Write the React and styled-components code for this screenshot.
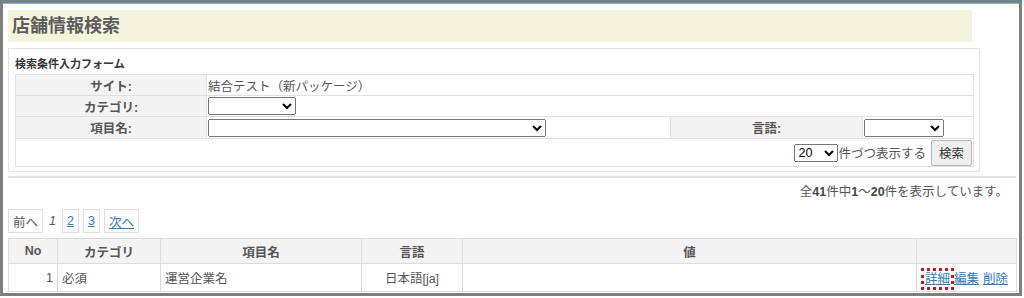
import styled, { createGlobalStyle } from "styled-components";

const GlobalStyle = createGlobalStyle`
  html, body {
    margin: 0;
    padding: 0;
    background: #fff;
  }
  body {
    font-family: "Liberation Sans", "Noto Sans CJK JP", sans-serif;
    font-size: 12.5px;
    color: #555;
  }
`;

const Frame = styled.div`
  box-sizing: border-box;
  width: 1022px;
  height: 296px;
  border: 3px solid #7f7f7f;
  box-shadow: inset 0 1px 0 #62c3e6;
  padding: 7px 3px 0 5px;
  overflow: hidden;
  background: #fff;
`;

const Title = styled.h1`
  box-sizing: border-box;
  width: 964px;
  height: 32px;
  margin: 0;
  padding: 0 4px;
  background: #f4f3dc;
  font-size: 18px;
  line-height: 32px;
  font-weight: bold;
  color: #5c5c5c;
`;

const FormBox = styled.div`
  box-sizing: border-box;
  width: 972px;
  margin-top: 6px;
  padding: 7px 6px 4px 6px;
  border: 1px solid #e2e2e2;
`;

const FormHeading = styled.div`
  font-size: 11px;
  font-weight: bold;
  color: #333;
  line-height: 16px;
  margin-bottom: 2px;
`;

const FormTable = styled.table`
  width: 958px;
  border-collapse: collapse;
  table-layout: fixed;
  td, th {
    border: 1px solid #e0e0e0;
    padding: 0 1px;
  }
`;

const LabelCell = styled.th`
  background: #f3f3f3;
  font-weight: bold;
  color: #555;
  text-align: center;
  font-size: 12.5px;
`;

const Row = styled.tr`
  height: ${(p) => p.$h}px;
`;

const ValueCell = styled.td`
  text-align: ${(p) => p.$align || "left"};
  font-size: 12.5px;
  color: #555;
`;

const Select = styled.select`
  box-sizing: border-box;
  width: ${(p) => p.$w}px;
  height: 18px;
  font-size: 12.5px;
  padding: 0;
  vertical-align: middle;
`;

const PerPage = styled.span`
  vertical-align: middle;
  margin: 0 5px 0 1px;
  font-size: 12.5px;
`;

const SearchButton = styled.button`
  box-sizing: border-box;
  width: 41px;
  height: 26px;
  font-family: inherit;
  font-size: 12.5px;
  color: #333;
  background: #efefef;
  border: 1px solid #b5b5b5;
  border-radius: 2px;
  padding: 0;
  vertical-align: middle;
`;

const Divider = styled.hr`
  width: 1008px;
  margin: 4px 0 0 0;
  border: 0;
  border-top: 2px solid #e3e3e3;
`;

const Total = styled.div`
  width: 1008px;
  text-align: right;
  padding-right: 8px;
  box-sizing: border-box;
  margin-top: 6px;
  line-height: 16px;
  color: #555;
  b {
    color: #444;
  }
`;

const Pager = styled.div`
  display: flex;
  align-items: center;
  gap: 4px;
  margin-top: 9px;
  height: 24px;
`;

const PageBox = styled.span`
  box-sizing: border-box;
  height: 24px;
  min-width: 17px;
  padding: 0 ${(p) => p.$pad || 0}px;
  border: 1px solid #dedede;
  display: flex;
  align-items: center;
  justify-content: center;
  color: ${(p) => (p.$link ? "#2f7bbf" : "#555")};
  text-decoration: ${(p) => (p.$link ? "underline" : "none")};
`;

const Current = styled.span`
  font-style: italic;
  padding: 0 2px 0 2px;
`;

const ResultTable = styled.table`
  width: 1008px;
  margin-top: 5px;
  border-collapse: collapse;
  table-layout: fixed;
  td, th {
    border: 1px solid #dcdcdc;
    padding: 0 4px;
  }
`;

const HeadCell = styled.th`
  height: 24px;
  background: #f3f3f3;
  font-weight: bold;
  text-align: center;
  color: #555;
`;

const DataCell = styled.td`
  height: 27px;
  text-align: ${(p) => p.$align || "left"};
  color: #555;
  white-space: nowrap;
  && {
    padding-right: ${(p) => p.$pr || 4}px;
  }
`;

const ActionLink = styled.a`
  color: #2f7bbf;
  text-decoration: underline;
  margin-left: 4px;
  outline: ${(p) => (p.$focus ? "3px dotted #c8141e" : "none")};
  outline-offset: 1px;
`;

export default function App() {
  return (
    <>
      <GlobalStyle />
      <Frame>
        <Title>店舗情報検索</Title>
        <FormBox>
          <FormHeading>検索条件入力フォーム</FormHeading>
          <FormTable>
            <colgroup>
              <col style={{ width: 191 }} />
              <col style={{ width: 464 }} />
              <col style={{ width: 192 }} />
              <col style={{ width: 111 }} />
            </colgroup>
            <tbody>
              <Row $h={21}>
                <LabelCell>サイト:</LabelCell>
                <ValueCell colSpan={3}>結合テスト（新パッケージ）</ValueCell>
              </Row>
              <Row $h={21}>
                <LabelCell>カテゴリ:</LabelCell>
                <ValueCell colSpan={3}>
                  <Select $w={88}>
                    <option></option>
                  </Select>
                </ValueCell>
              </Row>
              <Row $h={22}>
                <LabelCell>項目名:</LabelCell>
                <ValueCell>
                  <Select $w={338}>
                    <option></option>
                  </Select>
                </ValueCell>
                <LabelCell>言語:</LabelCell>
                <ValueCell>
                  <Select $w={80}>
                    <option></option>
                  </Select>
                </ValueCell>
              </Row>
              <Row $h={28}>
                <ValueCell colSpan={4} $align="right">
                  <Select $w={44}>
                    <option>20</option>
                  </Select>
                  <PerPage>件づつ表示する</PerPage>
                  <SearchButton>検索</SearchButton>
                </ValueCell>
              </Row>
            </tbody>
          </FormTable>
        </FormBox>
        <Divider />
        <Total>
          全<b>41</b>件中<b>1</b>〜<b>20</b>件を表示しています。
        </Total>
        <Pager>
          <PageBox $pad={4}>前へ</PageBox>
          <Current>1</Current>
          <PageBox $link>2</PageBox>
          <PageBox $link>3</PageBox>
          <PageBox $link $pad={4}>次へ</PageBox>
        </Pager>
        <ResultTable>
          <colgroup>
            <col style={{ width: 49 }} />
            <col style={{ width: 103 }} />
            <col style={{ width: 201 }} />
            <col style={{ width: 101 }} />
            <col style={{ width: 454 }} />
            <col style={{ width: 100 }} />
          </colgroup>
          <thead>
            <tr>
              <HeadCell>No</HeadCell>
              <HeadCell>カテゴリ</HeadCell>
              <HeadCell>項目名</HeadCell>
              <HeadCell>言語</HeadCell>
              <HeadCell>値</HeadCell>
              <HeadCell></HeadCell>
            </tr>
          </thead>
          <tbody>
            <tr>
              <DataCell $align="right">1</DataCell>
              <DataCell>必須</DataCell>
              <DataCell>運営企業名</DataCell>
              <DataCell $align="center">日本語[ja]</DataCell>
              <DataCell></DataCell>
              <DataCell $align="right" $pr={8}>
                <ActionLink $focus>詳細</ActionLink>
                <ActionLink>編集</ActionLink>
                <ActionLink>削除</ActionLink>
              </DataCell>
            </tr>
          </tbody>
        </ResultTable>
      </Frame>
    </>
  );
}
